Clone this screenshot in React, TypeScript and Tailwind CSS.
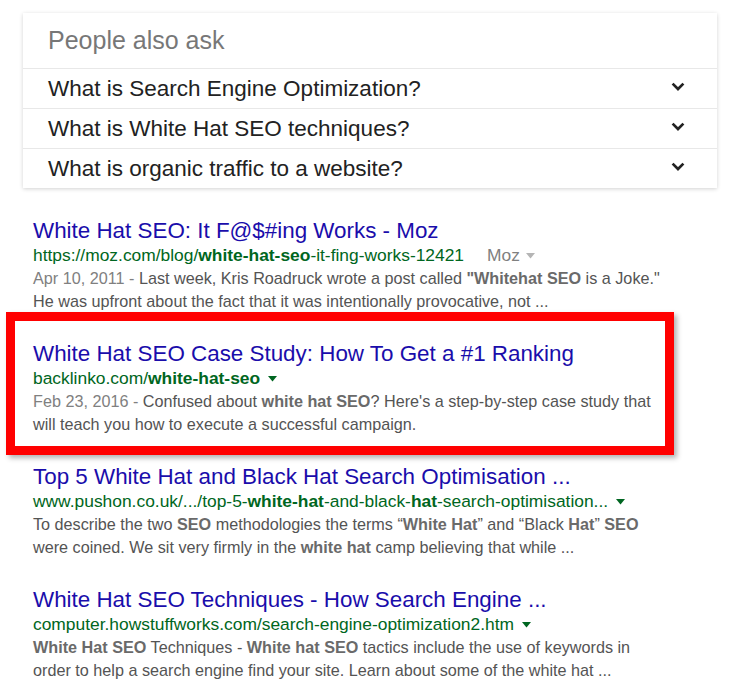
import React from 'react'

const questions = [
  'What is Search Engine Optimization?',
  'What is White Hat SEO techniques?',
  'What is organic traffic to a website?',
]

function Chevron() {
  return (
    <svg width="14" height="9" viewBox="0 0 14 9" className="mb-1">
      <path d="M1.6 1.6 L7 7 L12.4 1.6" fill="none" stroke="#222" strokeWidth="2.7" />
    </svg>
  )
}

function Caret({ color = '#006621' }: { color?: string }) {
  return (
    <svg width="9" height="6" viewBox="0 0 9 6" className="ml-[8px] inline-block">
      <path d="M0 0 L9 0 L4.5 5.5 Z" fill={color} />
    </svg>
  )
}

interface Result {
  title: string
  url: React.ReactNode
  extra?: React.ReactNode
  lines: React.ReactNode[]
}

const results: Result[] = [
  {
    title: 'White Hat SEO: It F@$#ing Works - Moz',
    url: (
      <>
        https://moz.com/blog/<b>white-hat-seo</b>-it-fing-works-12421
      </>
    ),
    extra: (
      <span className="ml-[23px] inline-flex items-center text-[#808080]">
        Moz
        <svg width="9" height="6" viewBox="0 0 9 6" className="ml-[6px]">
          <path d="M0 0 L9 0 L4.5 5.5 Z" fill="#b5b5b5" />
        </svg>
      </span>
    ),
    lines: [
      <>
        <span className="text-[#808080]">Apr 10, 2011 - </span>Last week, Kris Roadruck wrote a post called <b>"Whitehat SEO</b> is a Joke."
      </>,
      <>He was upfront about the fact that it was intentionally provocative, not ...</>,
    ],
  },
  {
    title: 'White Hat SEO Case Study: How To Get a #1 Ranking',
    url: (
      <>
        backlinko.com/<b>white-hat-seo</b>
        <Caret />
      </>
    ),
    lines: [
      <>
        <span className="text-[#808080]">Feb 23, 2016 - </span>Confused about <b>white hat SEO</b>? Here's a step-by-step case study that
      </>,
      <>will teach you how to execute a successful campaign.</>,
    ],
  },
  {
    title: 'Top 5 White Hat and Black Hat Search Optimisation ...',
    url: (
      <>
        www.pushon.co.uk/.../top-5-<b>white-hat</b>-and-black-<b>hat</b>-search-optimisation...
        <Caret />
      </>
    ),
    lines: [
      <>
        To describe the two <b>SEO</b> methodologies the terms “<b>White Hat</b>” and “Black <b>Hat</b>” <b>SEO</b>
      </>,
      <>
        were coined. We sit very firmly in the <b>white hat</b> camp believing that while ...
      </>,
    ],
  },
  {
    title: 'White Hat SEO Techniques - How Search Engine ...',
    url: (
      <>
        computer.howstuffworks.com/search-engine-optimization2.htm
        <Caret />
      </>
    ),
    lines: [
      <>
        <b>White Hat SEO</b> Techniques - <b>White hat SEO</b> tactics include the use of keywords in
      </>,
      <>order to help a search engine find your site. Learn about some of the white hat ...</>,
    ],
  },
]

export default function App() {
  return (
    <div className="relative h-[699px] w-[741px] overflow-hidden bg-white font-['Liberation_Sans',Arial,sans-serif]">
      <div className="pl-[23px] pt-[13px]">
        <div className="w-[694px] bg-white shadow-[0_1px_4px_rgba(0,0,0,0.18)]">
          <div className="h-[55px] pl-[25px] text-[25px] leading-[55px] text-[#777]">People also ask</div>
          {questions.map((q) => (
            <div key={q} className="flex h-[40px] items-center justify-between border-t border-[#e8e8e8] pl-[25px] pr-[32px]">
              <span className="text-[22.5px] leading-[39px] text-[#222]">{q}</span>
              <Chevron />
            </div>
          ))}
        </div>
      </div>

      <div className="mt-[30px] pl-[33px]">
        {results.map((r) => (
          <div key={r.title} className="mb-[28px] whitespace-nowrap">
            <div className="text-[22.4px] leading-[26px] text-[#1a0dab]">{r.title}</div>
            <div className="flex items-center text-[17.4px] leading-[23px] text-[#006621]">
              <span className="flex items-center">{r.url}</span>
              {r.extra}
            </div>
            {r.lines.map((l, i) => (
              <div key={i} className="text-[16.2px] leading-[23px] text-[#545454] [&_b]:text-[#6a6a6a]">
                {l}
              </div>
            ))}
          </div>
        ))}
      </div>

      <div className="absolute left-[6px] top-[312px] h-[143px] w-[668px] border-[9px] border-[#ff0000] shadow-[3px_3px_5px_rgba(0,0,0,0.3)]" />
    </div>
  )
}
